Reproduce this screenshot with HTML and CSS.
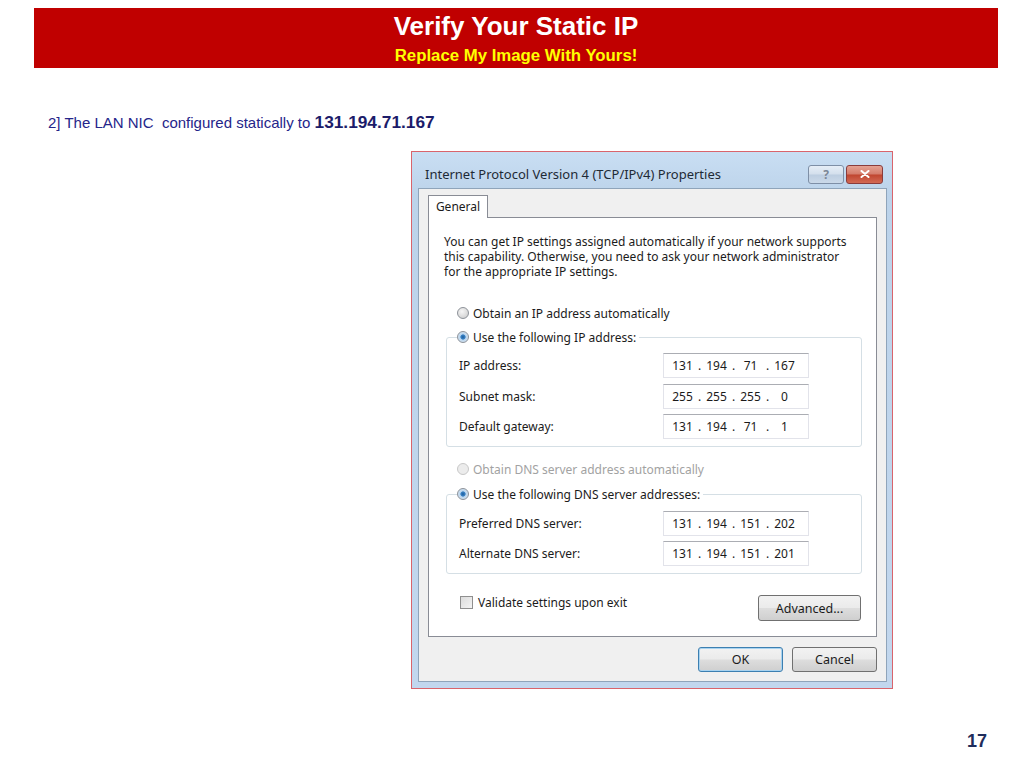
FILE: index.html
```html
<!DOCTYPE html>
<html lang="en">
<head>
  <meta charset="UTF-8">
  <title>Verify Your Static IP</title>
  <link rel="stylesheet" href="styles.css">
</head>
<body>
  <div class="slide">
    <div class="slide-head">
      <div class="slide-title">Verify Your Static IP</div>
      <div class="slide-sub">Replace My Image With Yours!</div>
    </div>

    <p class="step">2] The LAN NIC&nbsp; configured statically to <b>131.194.71.167</b></p>

    <div class="dlg">
      <div class="dlg-bar">
        <span class="dlg-title">Internet Protocol Version 4 (TCP/IPv4) Properties</span>
        <span class="cap-btn cap-help">?</span>
        <span class="cap-btn cap-close">
          <svg viewBox="0 0 10 8" width="10" height="8">
            <path d="M1.5 1 L8.5 7 M8.5 1 L1.5 7" stroke="#fff" stroke-width="2" stroke-linecap="round"/>
          </svg>
        </span>
      </div>

      <div class="dlg-client">
        <div class="tabs"><span class="tab">General</span></div>
        <div class="panel">
          <p class="intro">You can get IP settings assigned automatically if your network supports<br>
            this capability. Otherwise, you need to ask your network administrator<br>
            for the appropriate IP settings.</p>

          <div class="opt opt-first"><span class="radio"></span>Obtain an IP address automatically</div>

          <fieldset class="grp">
            <legend class="opt"><span class="radio on"></span>Use the following IP address:</legend>
            <div class="row">
              <span class="lbl">IP address:</span>
              <span class="ip"><i>131</i><em>.</em><i>194</i><em>.</em><i>71</i><em>.</em><i>167</i></span>
            </div>
            <div class="row">
              <span class="lbl">Subnet mask:</span>
              <span class="ip"><i>255</i><em>.</em><i>255</i><em>.</em><i>255</i><em>.</em><i>0</i></span>
            </div>
            <div class="row">
              <span class="lbl">Default gateway:</span>
              <span class="ip"><i>131</i><em>.</em><i>194</i><em>.</em><i>71</i><em>.</em><i>1</i></span>
            </div>
          </fieldset>

          <div class="opt opt-off"><span class="radio"></span>Obtain DNS server address automatically</div>

          <fieldset class="grp grp-dns">
            <legend class="opt"><span class="radio on"></span>Use the following DNS server addresses:</legend>
            <div class="row">
              <span class="lbl">Preferred DNS server:</span>
              <span class="ip"><i>131</i><em>.</em><i>194</i><em>.</em><i>151</i><em>.</em><i>202</i></span>
            </div>
            <div class="row">
              <span class="lbl">Alternate DNS server:</span>
              <span class="ip"><i>131</i><em>.</em><i>194</i><em>.</em><i>151</i><em>.</em><i>201</i></span>
            </div>
          </fieldset>

          <div class="panel-foot">
            <span class="check"><span class="box"></span>Validate settings upon exit</span>
            <span class="btn btn-adv">Advanced...</span>
          </div>
        </div>

        <div class="dlg-buttons">
          <span class="btn btn-default">OK</span>
          <span class="btn">Cancel</span>
        </div>
      </div>
    </div>

    <div class="slide-num">17</div>
  </div>
</body>
</html>
```

FILE: styles.css
```css
html, body {
  margin: 0; padding: 0;
  background: #fff;
}
.slide {
  width: 1024px; height: 768px;
  display: flex; flex-direction: column;
  overflow: hidden;
  font-family: 'Liberation Sans', Arial, sans-serif;
}
/* header bar */
.slide-head {
  margin: 8px 0 0 34px;
  width: 964px;
  height: 60px;
  box-sizing: border-box;
  padding-top: 3px;
  background: #c00000;
  text-align: center;
}
.slide-title {
  color: #fff;
  font-weight: bold;
  font-size: 26px;
  line-height: 30px;
}
.slide-sub {
  color: #ffff00;
  font-weight: bold;
  font-size: 16.8px;
  line-height: 20px;
  margin-top: 5px;
}
.step {
  margin: 44px 0 0 48px;
  font-size: 15px;
  line-height: 20px;
  color: #25258a;
}
.step b {
  font-size: 17.3px;
  color: #1c1c6a;
}

/* dialog window */
.dlg {
  margin: 18px 0 0 411px;
  width: 482px;
  box-sizing: border-box;
  border: 1px solid #d9646c;
  background: linear-gradient(180deg, #c9def3 0%, #bcd3ea 8%, #c2d7ee 100%);
  padding: 0 5px 6px 6px;
  font-family: 'Noto Sans', 'Open Sans', sans-serif;
  font-size: 12px;
  color: #1b1b1b;
}
.dlg-bar {
  height: 36px;
  box-sizing: border-box;
  padding: 8px 4px 0 7px;
  display: flex; align-items: center;
}
.dlg-title {
  flex: 1;
  font-size: 13px;
  color: #1e2a36;
}
.cap-btn {
  height: 19px;
  box-sizing: border-box;
  border: 1px solid #7e8fa6;
  border-radius: 3px;
  display: flex; align-items: center; justify-content: center;
}
.cap-help {
  width: 36px;
  margin-right: 2px;
  background: linear-gradient(180deg, #e6eef7 0%, #d3dfec 48%, #bccde0 52%, #cbd9e9 100%);
  color: #7b8796;
  font-weight: bold;
  font-size: 12px;
}
.cap-close {
  width: 37px;
  border-color: #8a3c3c;
  background: linear-gradient(180deg, #e5a293 0%, #d47b6a 48%, #c0452f 52%, #d26a55 100%);
}
.dlg-client {
  border: 1px solid #8fa4ba;
  background: #f0f0f0;
  padding: 6px 9px 9px 9px;
}
.tabs {
  display: flex;
  margin-bottom: -1px;
  position: relative;
  z-index: 1;
}
.tab {
  width: 60px;
  height: 23px;
  box-sizing: border-box;
  border: 1px solid #898c95;
  border-bottom: none;
  background: #fff;
  text-align: center;
  line-height: 22px;
}
.panel {
  height: 420px;
  box-sizing: border-box;
  border: 1px solid #898c95;
  background: #fff;
  padding: 16px 14px 0 15px;
}
.intro {
  margin: 0;
  line-height: 15px;
  white-space: nowrap;
}
.opt {
  display: flex; align-items: center;
  height: 20px;
  padding-left: 13px;
}
.opt-first { margin-top: 24px; }
.opt-off {
  margin-top: 12px;
  color: #a2a2a2;
}
.radio {
  width: 12px; height: 12px;
  box-sizing: border-box;
  border-radius: 50%;
  border: 1px solid #8d9299;
  background: radial-gradient(circle at 40% 35%, #f6f6f6 0%, #d6d6d6 70%, #c6c6c6 100%);
  margin-right: 4px;
}
.radio.on {
  background: radial-gradient(circle, #1c5d9c 0%, #3e86c8 32%, #bcd6ee 42%, #dde8f2 100%);
}
.opt-off .radio {
  border-color: #c8c8c8;
  background: #ececec;
}
.grp {
  margin: 4px 0 0 2px;
  border: 1px solid #d5dfe5;
  border-radius: 3px;
  padding: 0 12px 7px 12px;
  display: flex; flex-direction: column;
  gap: 5.5px;
}
.grp legend {
  padding: 0 3px 0 0;
  margin-left: -2px;
}
.grp .row:first-of-type { margin-top: 6px; }
.grp-dns { margin-top: 5px; gap: 5px; }
.grp-dns .row:first-of-type { margin-top: 7px; }
.row {
  display: flex; align-items: center;
  height: 25px;
}
.lbl { width: 204px; }
.ip {
  width: 146px; height: 25px;
  box-sizing: border-box;
  border: 1px solid #e2e3ea;
  border-top-color: #abadb3;
  display: flex; align-items: center;
  padding-left: 5px;
}
.ip i {
  font-style: normal;
  width: 27px;
  text-align: center;
}
.ip em {
  font-style: normal;
  width: 7px;
  text-align: center;
}
.panel-foot {
  margin-top: 21px;
  display: flex; justify-content: space-between; align-items: flex-start;
  padding-right: 1px;
}
.check {
  display: flex; align-items: center;
  height: 14px;
  padding-left: 16px;
}
.box {
  width: 13px; height: 13px;
  box-sizing: border-box;
  border: 1px solid #8f8f8f;
  background: linear-gradient(135deg, #dcdcdc 0%, #f4f4f4 100%);
  margin-right: 5px;
}
.btn {
  width: 85px; height: 25px;
  box-sizing: border-box;
  border: 1px solid #707070;
  border-radius: 3px;
  background: linear-gradient(180deg, #f2f2f2 0%, #ebebeb 48%, #dddddd 52%, #cfcfcf 100%);
  display: flex; align-items: center; justify-content: center;
  font-size: 12.5px;
}
.btn-adv { width: 103px; height: 26px; }
.btn-default {
  border-color: #3c7fb1;
  box-shadow: inset 0 0 0 1px #a8d3f0;
}
.dlg-buttons {
  margin-top: 10px;
  display: flex; justify-content: flex-end;
  gap: 9px;
}
.slide-num {
  margin-top: auto;
  margin-bottom: 16px;
  padding-right: 37px;
  text-align: right;
  font-weight: bold;
  font-size: 18px;
  color: #1f2d5c;
}
```
